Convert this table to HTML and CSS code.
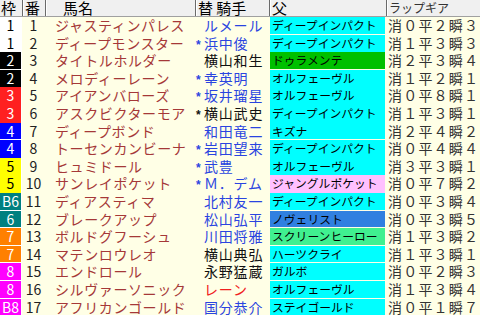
FILE: index.html
```html
<!DOCTYPE html>
<html lang="ja">
<head>
<meta charset="utf-8">
<link rel="stylesheet" href="styles.css">
</head>
<body>
<div class="table">
  <div class="row head">
    <div class="h h-waku">枠</div>
    <div class="h h-ban">番</div>
    <div class="h h-name">馬名</div>
    <div class="h h-jockey">替&nbsp;騎手</div>
    <div class="h h-sire">父</div>
    <div class="h h-lap">ラップギア</div>
  </div>

  <div class="row"><div class="waku w1">1</div><div class="ban">1</div><div class="name">ジャスティンパレス</div><div class="jockey blue"><span class="mark"></span>ルメール</div><div class="sire"><span class="sb cyan">ディープインパクト</span></div><div class="lap">消０平２瞬３</div></div>
  <div class="row"><div class="waku w1">1</div><div class="ban">2</div><div class="name">ディープモンスター</div><div class="jockey blue"><span class="mark">*</span>浜中俊</div><div class="sire"><span class="sb cyan">ディープインパクト</span></div><div class="lap">消１平３瞬３</div></div>
  <div class="row"><div class="waku w2">2</div><div class="ban">3</div><div class="name">タイトルホルダー</div><div class="jockey black"><span class="mark"></span>横山和生</div><div class="sire"><span class="sb green">ドゥラメンテ</span></div><div class="lap">消２平３瞬４</div></div>
  <div class="row"><div class="waku w2">2</div><div class="ban">4</div><div class="name">メロディーレーン</div><div class="jockey blue"><span class="mark">*</span>幸英明</div><div class="sire"><span class="sb cyan">オルフェーヴル</span></div><div class="lap">消１平２瞬１</div></div>
  <div class="row"><div class="waku w3">3</div><div class="ban">5</div><div class="name">アイアンバローズ</div><div class="jockey blue"><span class="mark">*</span>坂井瑠星</div><div class="sire"><span class="sb cyan">オルフェーヴル</span></div><div class="lap">消０平８瞬１</div></div>
  <div class="row"><div class="waku w3">3</div><div class="ban">6</div><div class="name">アスクビクターモア</div><div class="jockey black"><span class="mark">*</span>横山武史</div><div class="sire"><span class="sb cyan">ディープインパクト</span></div><div class="lap">消１平３瞬１</div></div>
  <div class="row"><div class="waku w4">4</div><div class="ban">7</div><div class="name">ディープボンド</div><div class="jockey blue"><span class="mark"></span>和田竜二</div><div class="sire"><span class="sb cyan">キズナ</span></div><div class="lap">消２平４瞬２</div></div>
  <div class="row"><div class="waku w4">4</div><div class="ban">8</div><div class="name">トーセンカンビーナ</div><div class="jockey blue"><span class="mark">*</span>岩田望来</div><div class="sire"><span class="sb cyan">ディープインパクト</span></div><div class="lap">消０平４瞬４</div></div>
  <div class="row"><div class="waku w5">5</div><div class="ban">9</div><div class="name">ヒュミドール</div><div class="jockey blue"><span class="mark">*</span>武豊</div><div class="sire"><span class="sb cyan">オルフェーヴル</span></div><div class="lap">消３平３瞬１</div></div>
  <div class="row"><div class="waku w5">5</div><div class="ban">10</div><div class="name">サンレイポケット</div><div class="jockey blue"><span class="mark">*</span>Ｍ．デム</div><div class="sire"><span class="sb pink">ジャングルポケット</span></div><div class="lap">消０平７瞬２</div></div>
  <div class="row"><div class="waku w6">B6</div><div class="ban">11</div><div class="name">ディアスティマ</div><div class="jockey blue"><span class="mark"></span>北村友一</div><div class="sire"><span class="sb cyan">ディープインパクト</span></div><div class="lap">消０平３瞬４</div></div>
  <div class="row"><div class="waku w6">6</div><div class="ban">12</div><div class="name">ブレークアップ</div><div class="jockey blue"><span class="mark"></span>松山弘平</div><div class="sire"><span class="sb navy">ノヴェリスト</span></div><div class="lap">消０平３瞬５</div></div>
  <div class="row"><div class="waku w7">7</div><div class="ban">13</div><div class="name">ボルドグフーシュ</div><div class="jockey blue"><span class="mark"></span>川田将雅</div><div class="sire"><span class="sb mint">スクリーンヒーロー</span></div><div class="lap">消１平３瞬２</div></div>
  <div class="row"><div class="waku w7">7</div><div class="ban">14</div><div class="name">マテンロウレオ</div><div class="jockey black"><span class="mark"></span>横山典弘</div><div class="sire"><span class="sb cyan">ハーツクライ</span></div><div class="lap">消１平３瞬１</div></div>
  <div class="row"><div class="waku w8">8</div><div class="ban">15</div><div class="name">エンドロール</div><div class="jockey black"><span class="mark"></span>永野猛蔵</div><div class="sire"><span class="sb cyan">ガルボ</span></div><div class="lap">消０平２瞬３</div></div>
  <div class="row"><div class="waku w8">8</div><div class="ban">16</div><div class="name">シルヴァーソニック</div><div class="jockey red"><span class="mark"></span>レーン</div><div class="sire"><span class="sb cyan">オルフェーヴル</span></div><div class="lap">消１平３瞬４</div></div>
  <div class="row"><div class="waku w8">B8</div><div class="ban">17</div><div class="name">アフリカンゴールド</div><div class="jockey blue"><span class="mark"></span>国分恭介</div><div class="sire"><span class="sb cyan">ステイゴールド</span></div><div class="lap">消０平１瞬７</div></div>
</div>
</body>
</html>
```

FILE: styles.css
```css
html, body {
  margin: 0;
  padding: 0;
  background: #ffffe6;
}
body {
  width: 480px;
  height: 315px;
  overflow: hidden;
  font-family: "Noto Sans CJK JP", "DejaVu Sans", sans-serif;
  color: #000;
}
.table {
  display: flex;
  flex-direction: column;
}
.row {
  display: grid;
  grid-template-columns: 22px 23px 150px 74px 117px 94px;
  height: 17.6px;
  line-height: 17.6px;
  font-size: 14px;
  white-space: nowrap;
  overflow: hidden;
}
.row.head {
  height: 17px;
  line-height: 16px;
  background: #f0f0f0;
  border-bottom: 1px solid #a0a0a0;
  box-sizing: border-box;
}
.h {
  font-size: 15px;
  border-left: 1px solid #6a6a6a;
  box-shadow: inset 1px 0 0 #ffffff;
  padding-left: 2px;
}
.h-waku {
  border-left: none;
  box-shadow: none;
  padding-left: 1px;
}
.h-name {
  padding-left: 17px;
}
.h-lap {
  font-size: 12px;
  color: #333;
  padding-left: 2px;
}
.waku {
  text-align: center;
  border-right: 1px solid #ffffff;
  border-bottom: 1px solid #ffffff;
  box-sizing: border-box;
  line-height: 16.6px;
  color: #ffffff;
}
.w1 { background: #ffffff; color: #000; }
.w2 { background: #000000; }
.w3 { background: #ff2020; }
.w4 { background: #0000ff; }
.w5 { background: #ffff00; color: #000; }
.w6 { background: #008080; }
.w7 { background: #ff8000; }
.w8 { background: #ff00ff; }
.ban {
  text-align: center;
  color: #222;
}
.name {
  padding-left: 10px;
  letter-spacing: 0.6px;
  color: #a53838;
}
.jockey {
  padding-left: 1px;
  letter-spacing: 0.8px;
}
.mark {
  display: inline-block;
  width: 8px;
  font-size: 12px;
  letter-spacing: 0;
  font-family: "Liberation Sans", sans-serif;
  font-weight: bold;
}
.blue { color: #2a44e0; }
.black { color: #111; }
.red { color: #f02020; }
.sire {
  display: flex;
  padding: 0 1px 1px 1px;
  box-sizing: border-box;
}
.sb {
  flex: 1;
  font-size: 11.8px;
  line-height: 16.6px;
  padding-left: 2px;
  color: #000;
}
.cyan { background: #00ffff; }
.green { background: #00c000; }
.pink { background: #ffc0ff; }
.navy { background: #3080e0; }
.mint { background: #40f090; }
.lap {
  padding-left: 2px;
  letter-spacing: 1.2px;
  color: #333;
}
```
